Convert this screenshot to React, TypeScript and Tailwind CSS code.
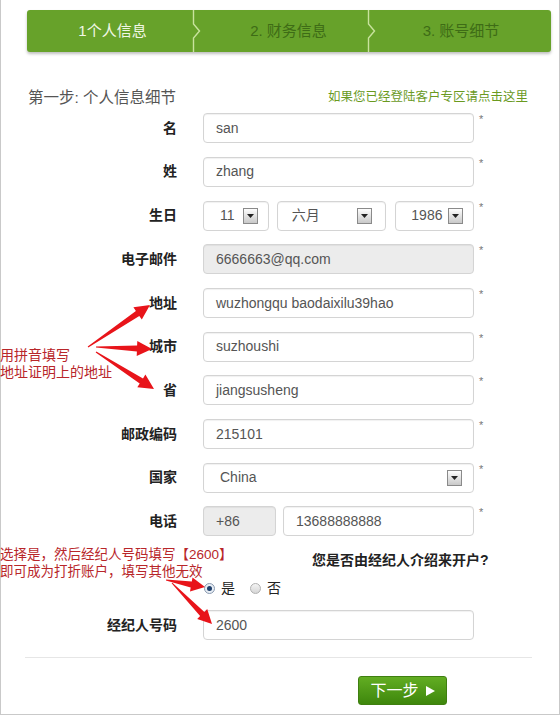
import React from "react";

const FONT = { fontFamily: '"Liberation Sans", Arial, "Noto Sans CJK SC", sans-serif' };

function arrowPoints(x0: number, y0: number, x1: number, y1: number, tail = 1, shaft = 6, head = 15, headLen = 15) {
  const dx = x1 - x0;
  const dy = y1 - y0;
  const len = Math.sqrt(dx * dx + dy * dy);
  const ux = dx / len;
  const uy = dy / len;
  const nx = -uy;
  const ny = ux;
  const bx = x1 - ux * headLen;
  const by = y1 - uy * headLen;
  const p = [
    [x0 + nx * tail / 2, y0 + ny * tail / 2],
    [bx + nx * shaft / 2, by + ny * shaft / 2],
    [bx + nx * head / 2, by + ny * head / 2],
    [x1, y1],
    [bx - nx * head / 2, by - ny * head / 2],
    [bx - nx * shaft / 2, by - ny * shaft / 2],
    [x0 - nx * tail / 2, y0 - ny * tail / 2],
  ];
  return p.map((q) => q[0].toFixed(1) + "," + q[1].toFixed(1)).join(" ");
}

function SelArrow() {
  return (
    <span className="flex h-[16px] w-[15px] items-center justify-center border border-[#8a8a8a] bg-gradient-to-b from-[#fdfdfd] to-[#c9c9c9]">
      <svg width="7" height="4" viewBox="0 0 7 4">
        <polygon points="0,0 7,0 3.5,4" fill="#222" />
      </svg>
    </span>
  );
}

const boxCls =
  "h-[30px] rounded-[4px] border border-[#d4d4d4] shadow-[inset_0_1px_1px_rgba(0,0,0,0.06)] flex items-center text-[14px] text-[#555]";

function Row({ label, children, star = true }: { label: string; children: React.ReactNode; star?: boolean }) {
  return (
    <div className="flex h-[30px] items-stretch">
      <div className="flex w-[177px] items-center justify-end text-[14px] font-bold text-[#222]">{label}</div>
      <div className="ml-[26px] flex w-[271px] gap-[7px]">{children}</div>
      {star && <div className="ml-[5px] pt-[1px] text-[11px] leading-none text-[#777]">*</div>}
    </div>
  );
}

function Input({ value, gray = false, cls = "" }: { value: string; gray?: boolean; cls?: string }) {
  return (
    <div className={`${boxCls} ${gray ? "bg-[#ececec]" : "bg-white"} w-full pl-[12px] ${cls}`}>{value}</div>
  );
}

function Divider() {
  return (
    <svg width="10" height="42" viewBox="0 0 10 42" className="shrink-0">
      <polyline points="1.5,0 1.5,14 7.5,21 1.5,28 1.5,42" fill="none" stroke="#c9e39e" strokeWidth="1.4" />
    </svg>
  );
}

export default function App() {
  return (
    <div style={FONT} className="relative h-[715px] w-[560px] overflow-hidden bg-white">
      <div className="absolute inset-0 border-x border-b border-[#c9c9c9] pointer-events-none" />
      {/* step bar */}
      <div className="ml-[27px] mt-[10px] flex h-[42px] w-[524px] rounded-[3px] bg-[#67a22a] shadow-[0_2px_3px_rgba(0,0,0,0.25)] text-[15px]">
        <div className="flex w-[165px] items-center justify-center pl-[6px] text-[#f1f7e6]">1个人信息</div>
        <Divider />
        <div className="flex w-[165px] items-center justify-center pl-[8px] text-[#3e6c16]">2. 财务信息</div>
        <Divider />
        <div className="flex flex-1 items-center justify-center pr-[6px] text-[#3e6c16]">3. 账号细节</div>
      </div>

      {/* heading */}
      <div className="ml-[28px] mt-[34px] flex w-[500px] items-center justify-between">
        <div className="text-[15.5px] text-[#555]">第一步: 个人信息细节</div>
        <div className="text-[12.5px] text-[#6a9a1f]">如果您已经登陆客户专区请点击这里</div>
      </div>

      {/* form */}
      <div className="mt-[4px] flex flex-col gap-[13.7px]">
        <Row label="名"><Input value="san" /></Row>
        <Row label="姓"><Input value="zhang" /></Row>
        <Row label="生日">
          <div className={`${boxCls} w-[66px] justify-between bg-white pl-[16px] pr-[10px]`}>
            <span>11</span>
            <SelArrow />
          </div>
          <div className={`${boxCls} w-[110px] justify-between bg-white pl-[14px] pr-[13px] ml-[1px]`}>
            <span>六月</span>
            <SelArrow />
          </div>
          <div className={`${boxCls} w-[79px] justify-between bg-white pl-[15px] pr-[10px] ml-[2px]`}>
            <span>1986</span>
            <SelArrow />
          </div>
        </Row>
        <Row label="电子邮件"><Input value="6666663@qq.com" gray /></Row>
        <Row label="地址"><Input value="wuzhongqu baodaixilu39hao" /></Row>
        <Row label="城市"><Input value="suzhoushi" /></Row>
        <Row label="省"><Input value="jiangsusheng" /></Row>
        <Row label="邮政编码"><Input value="215101" /></Row>
        <Row label="国家">
          <div className={`${boxCls} w-full justify-between bg-white pl-[16px] pr-[11px]`}>
            <span>China</span>
            <SelArrow />
          </div>
        </Row>
        <Row label="电话">
          <div className={`${boxCls} w-[73px] shrink-0 bg-[#ececec] pl-[12px]`}>+86</div>
          <Input value="13688888888" />
        </Row>
      </div>

      {/* question */}
      <div className="ml-[312px] mt-[16px] text-[14px] font-bold leading-[17px] text-[#222]">您是否由经纪人介绍来开户?</div>
      <div className="ml-[204px] mt-[11px] flex items-center text-[14px] leading-[16px] text-[#222]">
        <span className="flex h-[11px] w-[11px] items-center justify-center rounded-full border border-[#8a9ab0] bg-[#e8eef5]">
          <span className="h-[5px] w-[5px] rounded-full bg-[#1f3f6a]" />
        </span>
        <span className="ml-[6px]">是</span>
        <span className="ml-[15px] h-[11px] w-[11px] rounded-full border border-[#b0b0b0] bg-gradient-to-b from-[#f4f4f4] to-[#d6d6d6]" />
        <span className="ml-[6px]">否</span>
      </div>
      <div className="mt-[14px]">
        <Row label="经纪人号码" star={false}><Input value="2600" /></Row>
      </div>

      <div className="ml-[25px] mt-[17px] h-px w-[507px] bg-[#e6e6e6]" />

      <div className="ml-[358px] mt-[18px] flex h-[29px] w-[89px] items-center justify-center gap-[7px] rounded-[3px] border border-[#3f7f10] bg-gradient-to-b from-[#62ad22] to-[#3e870c] text-[16px] text-white">
        <span>下一步</span>
        <svg width="9" height="10" viewBox="0 0 9 10">
          <polygon points="0,0 9,5 0,10" fill="#fff" />
        </svg>
      </div>

      {/* annotations */}
      <div className="absolute left-0 top-[347px] text-[14px] leading-[17px] text-[#b8262a]">
        <div>用拼音填写</div>
        <div>地址证明上的地址</div>
      </div>
      <div className="absolute left-0 top-[546px] text-[13.5px] leading-[17px] text-[#b8262a]">
        <div>选择是，然后经纪人号码填写【2600】</div>
        <div>即可成为打折账户，填写其他无效</div>
      </div>
      <svg className="pointer-events-none absolute left-0 top-0" width="560" height="715" viewBox="0 0 560 715">
        <polygon points={arrowPoints(88, 347, 150, 305)} fill="#e8141a" />
        <polygon points={arrowPoints(96, 347, 152, 349)} fill="#e8141a" />
        <polygon points={arrowPoints(96, 352, 154, 389)} fill="#e8141a" />
        <polygon points={arrowPoints(166, 580, 205, 587, 1, 6, 14, 14)} fill="#e8141a" />
        <polygon points={arrowPoints(172, 583, 212, 624, 1, 6, 14, 14)} fill="#e8141a" />
      </svg>
    </div>
  );
}
